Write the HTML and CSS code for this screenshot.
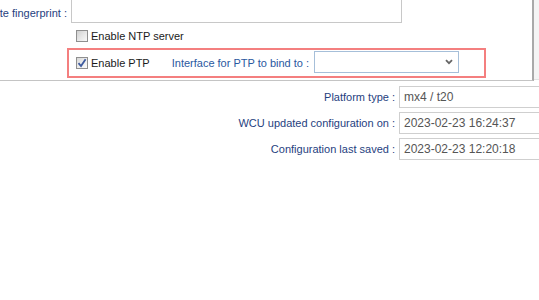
FILE: index.html
```html
<!DOCTYPE html>
<html>
<head>
<meta charset="utf-8">
<link rel="stylesheet" href="styles.css">
</head>
<body>
<div class="wrap">
  <div class="panel">
    <div class="row row-fp">
      <div class="lbl lbl-fp"><span>Certificate fingerprint :</span></div>
      <input class="txt" type="text">
    </div>
    <div class="row row-ntp">
      <span class="cb"></span>
      <span class="cb-text">Enable NTP server</span>
    </div>
    <div class="ptp-box">
      <span class="cb checked"><svg width="10" height="10" viewBox="0 0 10 10"><path d="M1.5 5.2 L4 8 L8.6 1.2" fill="none" stroke="#3d5a9e" stroke-width="1.8"/></svg></span>
      <span class="cb-text">Enable PTP</span>
      <span class="lbl ptp-lbl">Interface for PTP to bind to :</span>
      <span class="sel-wrap">
        <select class="sel"><option></option></select>
        <svg class="chev" width="8" height="6" viewBox="0 0 8 6"><path d="M1 1.2 L4 4.2 L7 1.2" fill="none" stroke="#666" stroke-width="1.8"/></svg>
      </span>
    </div>
  </div>
  <div class="strip"></div>
</div>
<div class="info">
  <div class="irow"><div class="lbl ilbl">Platform type :</div><div class="val">mx4 / t20</div></div>
  <div class="irow"><div class="lbl ilbl">WCU updated configuration on :</div><div class="val">2023-02-23 16:24:37</div></div>
  <div class="irow"><div class="lbl ilbl">Configuration last saved :</div><div class="val">2023-02-23 12:20:18</div></div>
</div>
</body>
</html>
```

FILE: styles.css
```css
html, body {
  margin: 0;
  padding: 0;
  background: #fff;
  overflow: hidden;
}
body {
  font-family: "Liberation Sans", Arial, sans-serif;
  font-size: 11px;
  color: #222;
  width: 539px;
  height: 300px;
}
.wrap {
  display: flex;
  height: 81px;
}
.panel {
  width: 532px;
  height: 80px;
  flex: none;
  border-right: 2px solid #a9a9a9;
  border-bottom: 1px solid #c4c4c4;
  box-sizing: content-box;
  display: flex;
  flex-direction: column;
}
.strip {
  flex: 1;
  background: #f4f4f4;
  height: 80px;
  box-sizing: border-box;
  border-bottom: 1px solid #e2e2e2;
}
.lbl {
  color: #1f4180;
  white-space: nowrap;
  font-size: 11px;
}
.row {
  display: flex;
  align-items: center;
}
.row-fp {
  margin-top: -1px;
  height: 24px;
  gap: 4px;
}
.lbl-fp {
  width: 67px;
  flex: none;
  display: flex;
  justify-content: flex-end;
  padding-top: 3px;
}
.txt {
  width: 331px;
  height: 24px;
  flex: none;
  box-sizing: border-box;
  border: 1px solid #c8c8c8;
  margin: 0;
  padding: 0 4px;
  background: #fff;
  outline: none;
}
.row-ntp {
  height: 25px;
  padding-left: 76px;
}
.cb {
  width: 12px;
  height: 12px;
  box-sizing: border-box;
  border: 1px solid #8f8f8f;
  background: linear-gradient(135deg, #d0d0d0 0%, #e6e6e6 50%, #f8f8f8 100%);
  display: inline-flex;
  align-items: center;
  justify-content: center;
  flex: none;
}
.cb.checked {
  background: linear-gradient(135deg, #d8d8d8 0%, #ececec 50%, #fafafa 100%);
}
.cb-text {
  margin-left: 3px;
  font-size: 11px;
  color: #1a1a1a;
}
.ptp-box {
  margin-left: 67px;
  width: 419px;
  height: 30px;
  box-sizing: border-box;
  border: 2px solid #f47f7f;
  display: flex;
  align-items: center;
  padding-left: 7px;
}
.ptp-lbl {
  margin-left: 22px;
  color: #2a58a0;
}
.sel-wrap {
  position: relative;
  margin-left: 5px;
  margin-bottom: 3px;
  display: block;
  width: 145px;
  height: 22px;
  flex: none;
}
.sel {
  appearance: none;
  -webkit-appearance: none;
  width: 145px;
  height: 22px;
  box-sizing: border-box;
  border: 1px solid #a6bfd9;
  border-radius: 0;
  background: #fff;
  margin: 0;
  outline: none;
}
.chev {
  position: absolute;
  right: 6px;
  top: 8px;
}
.info {
  padding-top: 5px;
  display: flex;
  flex-direction: column;
  gap: 4px;
}
.irow {
  display: flex;
  align-items: center;
  gap: 4px;
}
.ilbl {
  width: 395px;
  flex: none;
  text-align: right;
}
.val {
  flex: none;
  width: 140px;
  height: 22px;
  box-sizing: border-box;
  border: 1px solid #cfcfcf;
  border-right: none;
  padding: 0 4px;
  font-size: 12px;
  line-height: 20px;
  color: #555;
  white-space: nowrap;
}
```
